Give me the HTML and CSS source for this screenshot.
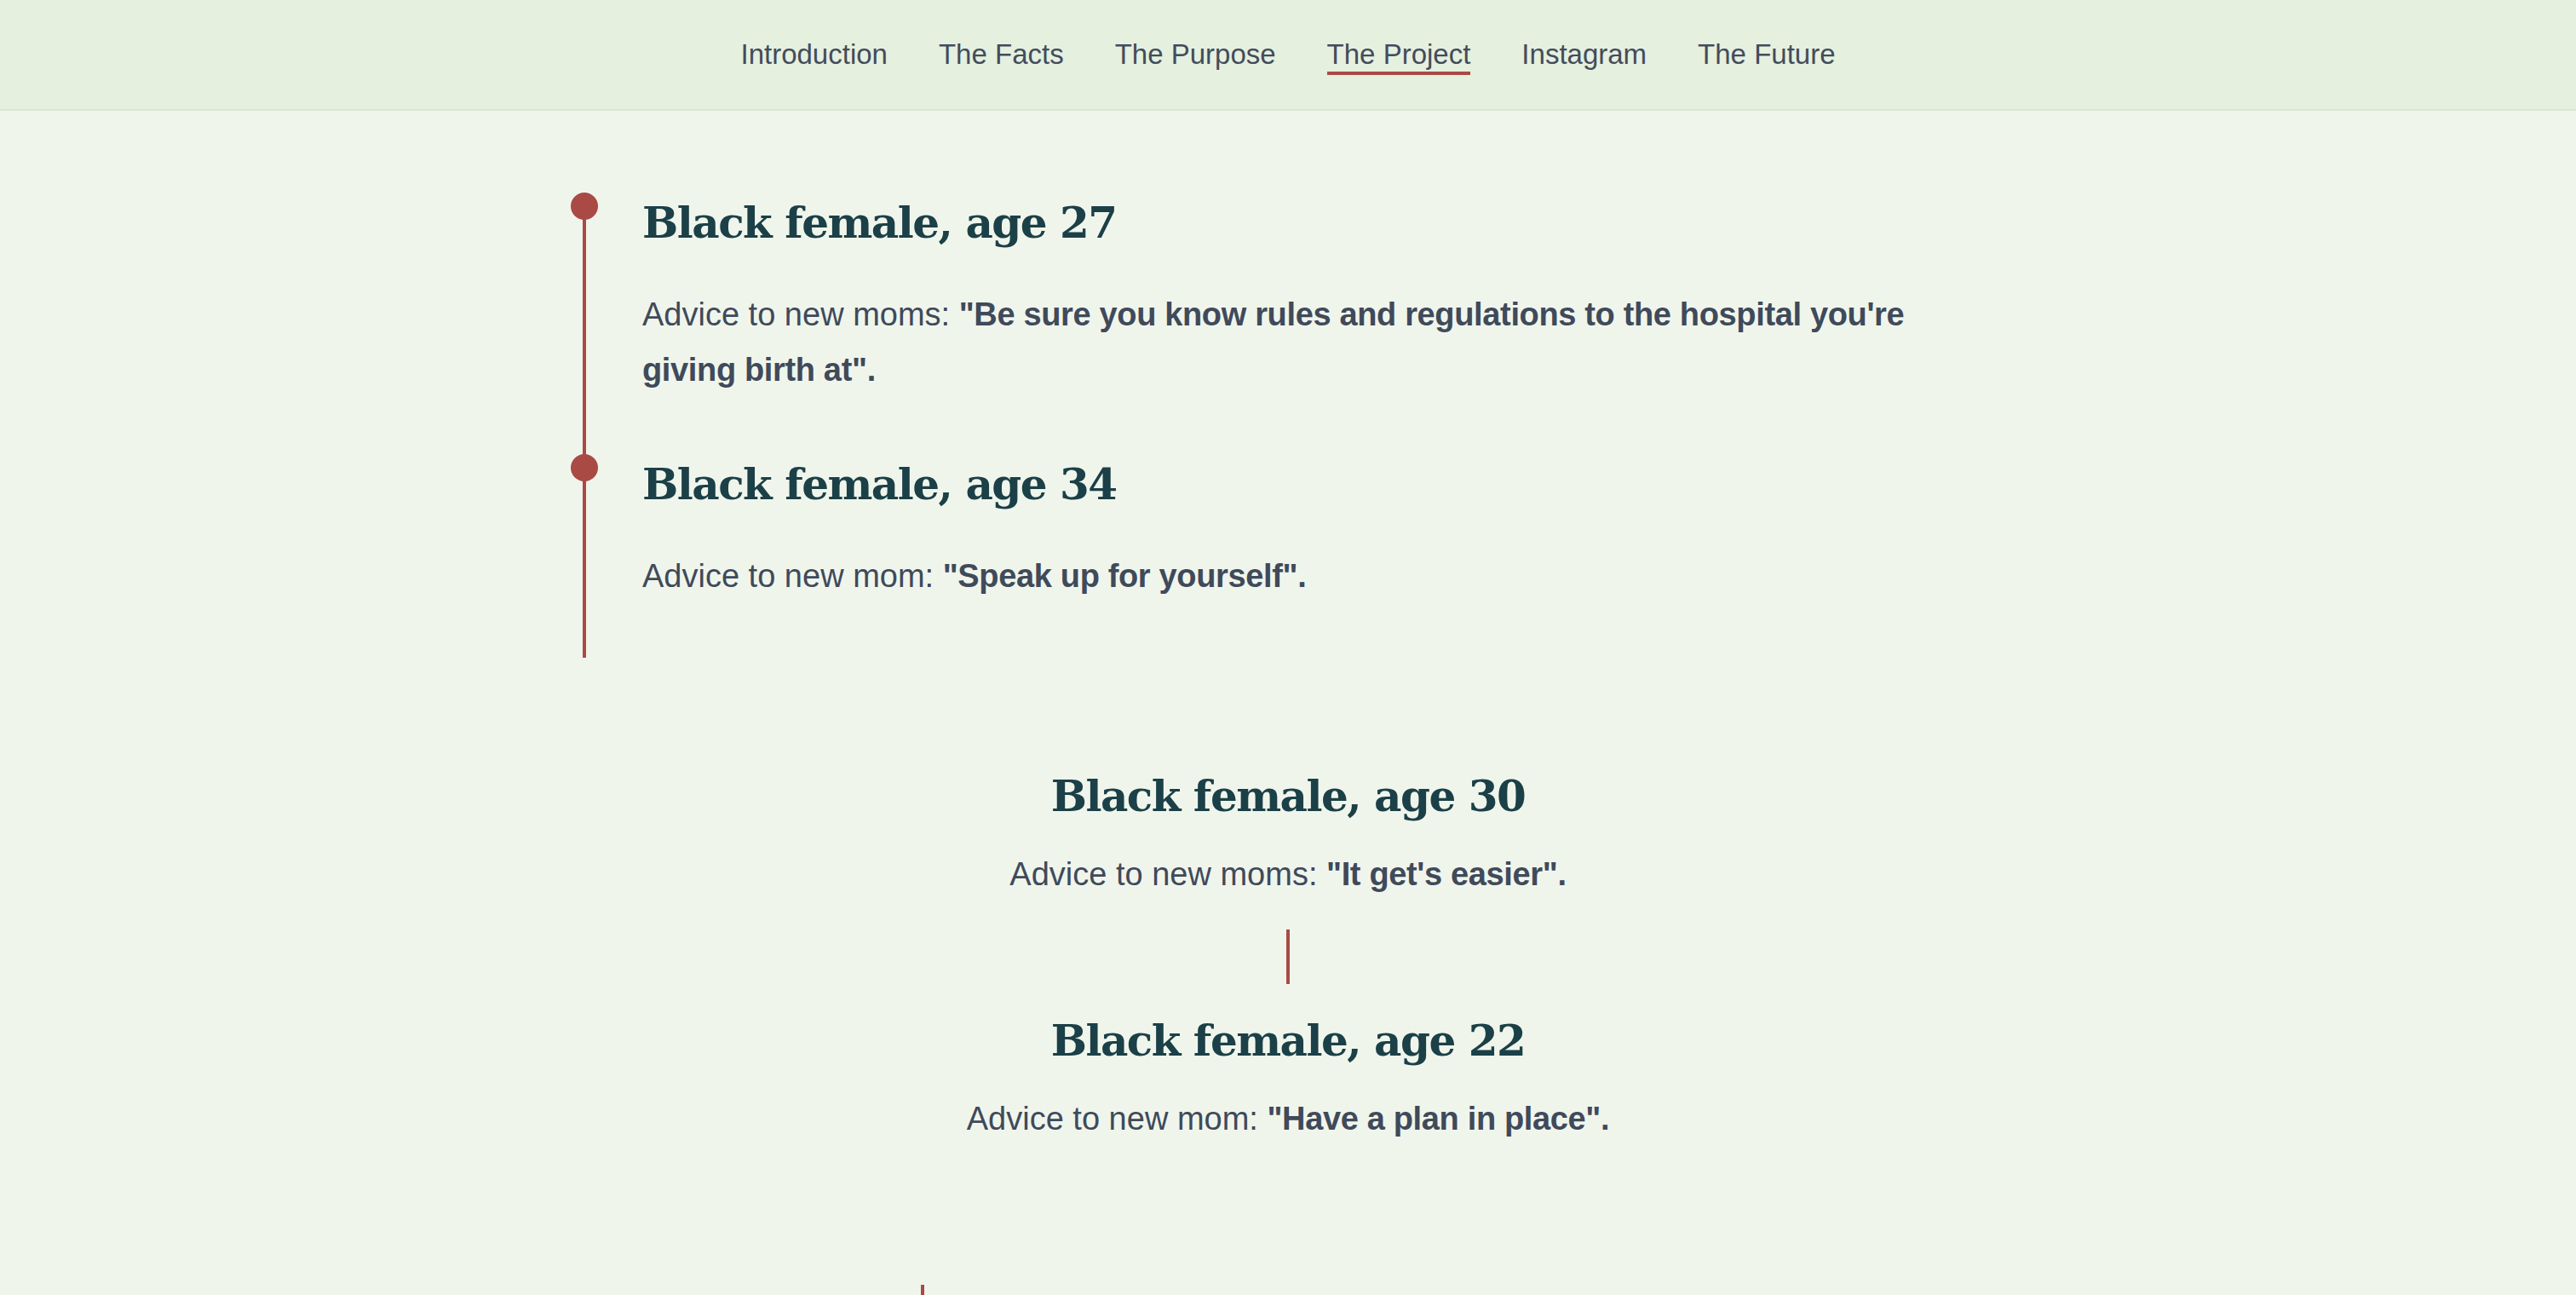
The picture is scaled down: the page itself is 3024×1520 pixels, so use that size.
FILE: index.html
```html
<!DOCTYPE html>
<html lang="en">
<head>
<meta charset="utf-8">
<title>The Project</title>
<link rel="stylesheet" href="styles.css">
</head>
<body>
<header class="site-nav">
  <nav class="nav-list">
    <a class="nav-link" href="#introduction">Introduction</a>
    <a class="nav-link" href="#facts">The Facts</a>
    <a class="nav-link" href="#purpose">The Purpose</a>
    <a class="nav-link is-active" href="#project">The Project</a>
    <a class="nav-link" href="#instagram">Instagram</a>
    <a class="nav-link" href="#future">The Future</a>
  </nav>
</header>
<main class="content">
  <section class="container">
    <ol class="timeline">
      <li class="timeline-item">
        <span class="timeline-dot"></span>
        <h2 class="entry-title">Black female, age 27</h2>
        <p class="entry-text">Advice to new moms: <strong>"Be sure you know rules and regulations to the hospital you're giving birth at".</strong></p>
      </li>
      <li class="timeline-item">
        <span class="timeline-dot"></span>
        <h2 class="entry-title">Black female, age 34</h2>
        <p class="entry-text">Advice to new mom: <strong>"Speak up for yourself".</strong></p>
      </li>
    </ol>
  </section>
  <section class="centered">
    <div class="centered-entry">
      <h2 class="entry-title">Black female, age 30</h2>
      <p class="entry-text centered-text">Advice to new moms: <strong>"It get's easier".</strong></p>
    </div>
    <div class="divider"></div>
    <div class="centered-entry">
      <h2 class="entry-title">Black female, age 22</h2>
      <p class="entry-text centered-text">Advice to new mom: <strong>"Have a plan in place".</strong></p>
    </div>
  </section>
  <section class="next-section">
    <div class="next-line"></div>
  </section>
</main>
</body>
</html>
```

FILE: styles.css
```css
html, body {
  margin: 0;
  padding: 0;
  background: #f0f5ec;
}

body {
  font-family: "Liberation Sans", Arial, sans-serif;
  color: #3f4a5a;
}

.site-nav {
  background: #e5f0de;
  border-bottom: 2px solid #d8e7d0;
  height: 128px;
}

.nav-list {
  display: flex;
  justify-content: center;
  gap: 60px;
  padding-top: 44px;
}

.nav-link {
  font-size: 33px;
  line-height: 40px;
  color: #434c5c;
  text-decoration: none;
  border-bottom: 4px solid transparent;
}

.nav-link.is-active {
  border-bottom-color: #a94a45;
}

.container {
  width: 1516px;
  margin: 100px auto 0;
}

.timeline {
  list-style: none;
  margin: 0;
  padding: 0 0 63px;
  position: relative;
}

.timeline::before {
  content: "";
  position: absolute;
  left: -70px;
  top: 12px;
  bottom: 0;
  width: 4px;
  background: #a94a45;
}

.timeline-item {
  position: relative;
}

.timeline-item + .timeline-item {
  margin-top: 70px;
}

.timeline-dot {
  position: absolute;
  left: -84px;
  top: -4px;
  width: 32px;
  height: 32px;
  border-radius: 50%;
  background: #a94a45;
}

.entry-title {
  font-family: "DejaVu Serif", "Liberation Serif", serif;
  font-weight: 700;
  font-size: 50px;
  letter-spacing: -1.5px;
  line-height: 64px;
  color: #1b4047;
  margin: 0;
}

.entry-text {
  font-family: "Liberation Sans", Arial, sans-serif;
  font-size: 38px;
  line-height: 65px;
  color: #3f4a5a;
  margin: 43px 0 0;
}

.entry-text strong {
  font-weight: 700;
  letter-spacing: -0.35px;
}

.centered {
  text-align: center;
  margin-top: 131px;
}

.centered-text {
  margin-top: 27px;
}

.divider {
  width: 4px;
  height: 64px;
  background: #a94a45;
  margin: 32px auto 35px;
}

.next-section {
  margin-top: 162px;
  padding-left: 1081px;
}

.next-line {
  width: 4px;
  height: 120px;
  background: #a94a45;
}
```
